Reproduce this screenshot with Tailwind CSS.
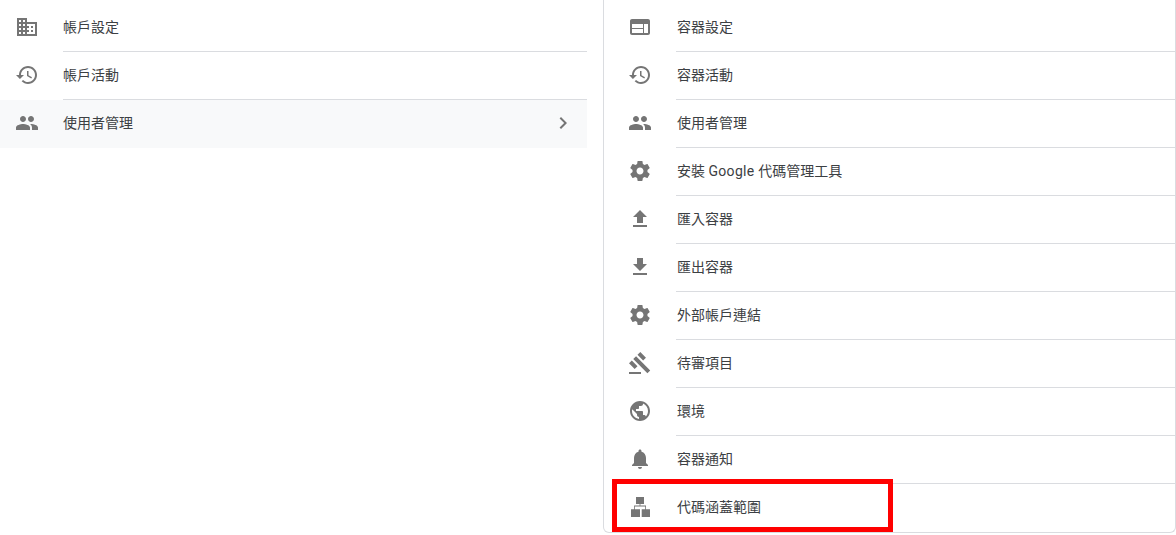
<!doctype html>
<html lang="zh-Hant">
<head>
<meta charset="utf-8">
<script src="https://cdn.jsdelivr.net/npm/@tailwindcss/browser@4"></script>
</head>
<body class="bg-white overflow-hidden">
<div class="relative flex w-[1176px] h-[535px] items-start gap-4 text-sm text-[#3c4043] font-['Roboto','Noto_Sans_CJK_TC',sans-serif]">
  <ul class="w-[587px] pt-[3px] shrink-0">
    <li class="flex h-12 items-center">
      <svg class="w-6 h-6 ml-[15px] mr-6 shrink-0 fill-[#757575]" viewBox="0 0 24 24"><path d="M12 7V3H2v18h20V7H12zM6 19H4v-2h2v2zm0-4H4v-2h2v2zm0-4H4V9h2v2zm0-4H4V5h2v2zm4 12H8v-2h2v2zm0-4H8v-2h2v2zm0-4H8V9h2v2zm0-4H8V5h2v2zm10 12h-8v-2h2v-2h-2v-2h2v-2h-2V9h8v10zm-2-8h-2v2h2v-2zm0 4h-2v2h2v-2z"/></svg>
      <div class="flex-1 h-full flex items-center shadow-[0_1px_0_#dadce0]">帳戶設定</div>
    </li>
    <li class="flex h-12 items-center">
      <svg class="w-6 h-6 ml-[15px] mr-6 shrink-0 fill-[#757575]" viewBox="0 0 24 24"><path d="M13 3c-4.97 0-9 4.03-9 9H1l3.89 3.89.07.14L9 12H6c0-3.87 3.13-7 7-7s7 3.13 7 7-3.13 7-7 7c-1.93 0-3.68-.79-4.94-2.06l-1.42 1.42C8.27 19.99 10.51 21 13 21c4.97 0 9-4.03 9-9s-4.03-9-9-9zm-1 5v5l4.28 2.54.72-1.21-3.5-2.08V8H12z"/></svg>
      <div class="flex-1 h-full flex items-center shadow-[0_1px_0_#dadce0]">帳戶活動</div>
    </li>
    <li class="flex h-12 mt-px pb-[2px] items-center bg-[#f8f9fa]">
      <svg class="w-6 h-6 ml-[15px] mr-6 shrink-0 fill-[#757575]" viewBox="0 0 24 24"><path d="M16 11c1.66 0 2.99-1.34 2.99-3S17.66 5 16 5c-1.66 0-3 1.34-3 3s1.34 3 3 3zm-8 0c1.66 0 2.99-1.34 2.99-3S9.66 5 8 5C6.34 5 5 6.34 5 8s1.34 3 3 3zm0 2c-2.33 0-7 1.17-7 3.5V19h14v-2.5c0-2.33-4.67-3.5-7-3.5zm8 0c-.29 0-.62.02-.97.05 1.16.84 1.97 1.97 1.97 3.45V19h6v-2.5c0-2.33-4.67-3.5-7-3.5z"/></svg>
      <div class="flex-1 h-full flex items-center">使用者管理</div>
      <svg class="w-6 h-6 mr-3 shrink-0 fill-[#757575]" viewBox="0 0 24 24"><path d="M10 6L8.59 7.41 13.17 12l-4.58 4.59L10 18l6-6z"/></svg>
    </li>
  </ul>
  <ul class="flex-1 h-[533px] pt-[3px] border-l border-r border-b border-[#dadce0] rounded-br-md rounded-bl-md">
    <li class="flex h-12 items-center">
      <svg class="w-6 h-6 ml-6 mr-6 shrink-0 fill-[#757575]" viewBox="0 0 24 24"><path d="M20 4H4c-1.1 0-1.99.9-1.99 2L2 18c0 1.1.9 2 2 2h16c1.1 0 2-.9 2-2V6c0-1.1-.9-2-2-2zm-5 14H4v-4h11v4zm0-5H4V9h11v4zm5 5h-4V9h4v9z"/></svg>
      <div class="flex-1 h-full flex items-center pl-px shadow-[0_1px_0_#dadce0]">容器設定</div>
    </li>
    <li class="flex h-12 items-center">
      <svg class="w-6 h-6 ml-6 mr-6 shrink-0 fill-[#757575]" viewBox="0 0 24 24"><path d="M13 3c-4.97 0-9 4.03-9 9H1l3.89 3.89.07.14L9 12H6c0-3.87 3.13-7 7-7s7 3.13 7 7-3.13 7-7 7c-1.93 0-3.68-.79-4.94-2.06l-1.42 1.42C8.27 19.99 10.51 21 13 21c4.97 0 9-4.03 9-9s-4.03-9-9-9zm-1 5v5l4.28 2.54.72-1.21-3.5-2.08V8H12z"/></svg>
      <div class="flex-1 h-full flex items-center pl-px shadow-[0_1px_0_#dadce0]">容器活動</div>
    </li>
    <li class="flex h-12 items-center">
      <svg class="w-6 h-6 ml-6 mr-6 shrink-0 fill-[#757575]" viewBox="0 0 24 24"><path d="M16 11c1.66 0 2.99-1.34 2.99-3S17.66 5 16 5c-1.66 0-3 1.34-3 3s1.34 3 3 3zm-8 0c1.66 0 2.99-1.34 2.99-3S9.66 5 8 5C6.34 5 5 6.34 5 8s1.34 3 3 3zm0 2c-2.33 0-7 1.17-7 3.5V19h14v-2.5c0-2.33-4.67-3.5-7-3.5zm8 0c-.29 0-.62.02-.97.05 1.16.84 1.97 1.97 1.97 3.45V19h6v-2.5c0-2.33-4.67-3.5-7-3.5z"/></svg>
      <div class="flex-1 h-full flex items-center pl-px shadow-[0_1px_0_#dadce0]">使用者管理</div>
    </li>
    <li class="flex h-12 items-center">
      <svg class="w-6 h-6 ml-6 mr-6 shrink-0 fill-[#757575]" viewBox="0 0 24 24"><path d="M19.43 12.98c.04-.32.07-.64.07-.98s-.03-.66-.07-.98l2.11-1.65c.19-.15.24-.42.12-.64l-2-3.46c-.12-.22-.39-.3-.61-.22l-2.49 1c-.52-.4-1.08-.73-1.69-.98l-.38-2.65C14.46 2.18 14.25 2 14 2h-4c-.25 0-.46.18-.49.42l-.38 2.65c-.61.25-1.17.59-1.69.98l-2.49-1c-.23-.09-.49 0-.61.22l-2 3.46c-.13.22-.07.49.12.64l2.11 1.65c-.04.32-.07.65-.07.98s.03.66.07.98l-2.11 1.65c-.19.15-.24.42-.12.64l2 3.46c.12.22.39.3.61.22l2.49-1c.52.4 1.08.73 1.69.98l.38 2.65c.03.24.24.42.49.42h4c.25 0 .46-.18.49-.42l.38-2.65c.61-.25 1.17-.59 1.69-.98l2.49 1c.23.09.49 0 .61-.22l2-3.46c.12-.22.07-.49-.12-.64l-2.11-1.65zM12 15.5c-1.93 0-3.5-1.57-3.5-3.5s1.57-3.5 3.5-3.5 3.5 1.57 3.5 3.5-1.57 3.5-3.5 3.5z"/></svg>
      <div class="flex-1 h-full flex items-center pl-px shadow-[0_1px_0_#dadce0] whitespace-pre">安裝 <span class="tracking-[0.3px]">Google </span>代碼管理工具</div>
    </li>
    <li class="flex h-12 items-center">
      <svg class="w-6 h-6 ml-6 mr-6 shrink-0 fill-[#757575]" viewBox="0 0 24 24"><path d="M9 16h6v-6h4l-7-7-7 7h4zm-4 2h14v2H5z"/></svg>
      <div class="flex-1 h-full flex items-center pl-px shadow-[0_1px_0_#dadce0]">匯入容器</div>
    </li>
    <li class="flex h-12 items-center">
      <svg class="w-6 h-6 ml-6 mr-6 shrink-0 fill-[#757575]" viewBox="0 0 24 24"><path d="M19 9h-4V3H9v6H5l7 7 7-7zM5 18v2h14v-2H5z"/></svg>
      <div class="flex-1 h-full flex items-center pl-px shadow-[0_1px_0_#dadce0]">匯出容器</div>
    </li>
    <li class="flex h-12 items-center">
      <svg class="w-6 h-6 ml-6 mr-6 shrink-0 fill-[#757575]" viewBox="0 0 24 24"><path d="M19.43 12.98c.04-.32.07-.64.07-.98s-.03-.66-.07-.98l2.11-1.65c.19-.15.24-.42.12-.64l-2-3.46c-.12-.22-.39-.3-.61-.22l-2.49 1c-.52-.4-1.08-.73-1.69-.98l-.38-2.65C14.46 2.18 14.25 2 14 2h-4c-.25 0-.46.18-.49.42l-.38 2.65c-.61.25-1.17.59-1.69.98l-2.49-1c-.23-.09-.49 0-.61.22l-2 3.46c-.13.22-.07.49.12.64l2.11 1.65c-.04.32-.07.65-.07.98s.03.66.07.98l-2.11 1.65c-.19.15-.24.42-.12.64l2 3.46c.12.22.39.3.61.22l2.49-1c.52.4 1.08.73 1.69.98l.38 2.65c.03.24.24.42.49.42h4c.25 0 .46-.18.49-.42l.38-2.65c.61-.25 1.17-.59 1.69-.98l2.49 1c.23.09.49 0 .61-.22l2-3.46c.12-.22.07-.49-.12-.64l-2.11-1.65zM12 15.5c-1.93 0-3.5-1.57-3.5-3.5s1.57-3.5 3.5-3.5 3.5 1.57 3.5 3.5-1.57 3.5-3.5 3.5z"/></svg>
      <div class="flex-1 h-full flex items-center pl-px shadow-[0_1px_0_#dadce0]">外部帳戶連結</div>
    </li>
    <li class="flex h-12 items-center">
      <svg class="w-6 h-6 ml-6 mr-6 shrink-0 fill-[#757575]" viewBox="0 0 24 24"><path d="M1 21h12v2H1zM5.245 8.07l2.83-2.827 14.14 14.142-2.828 2.828zM12.317 1l5.657 5.656-2.83 2.83-5.654-5.66zM3.825 9.485l5.657 5.657-2.828 2.828-5.657-5.657z"/></svg>
      <div class="flex-1 h-full flex items-center pl-px shadow-[0_1px_0_#dadce0]">待審項目</div>
    </li>
    <li class="flex h-12 items-center">
      <svg class="w-6 h-6 ml-6 mr-6 shrink-0 fill-[#757575]" viewBox="0 0 24 24"><path d="M12 2C6.48 2 2 6.48 2 12s4.48 10 10 10 10-4.48 10-10S17.52 2 12 2zm-1 17.93c-3.95-.49-7-3.85-7-7.93 0-.62.08-1.21.21-1.79L9 15v1c0 1.1.9 2 2 2v1.93zm6.9-2.54c-.26-.81-1-1.39-1.9-1.39h-1v-3c0-.55-.45-1-1-1H8v-2h2c.55 0 1-.45 1-1V7h2c1.1 0 2-.9 2-2v-.41c2.93 1.19 5 4.06 5 7.41 0 2.08-.8 3.97-2.1 5.39z"/></svg>
      <div class="flex-1 h-full flex items-center pl-px shadow-[0_1px_0_#dadce0]">環境</div>
    </li>
    <li class="flex h-12 items-center">
      <svg class="w-6 h-6 ml-6 mr-6 shrink-0 fill-[#757575]" viewBox="0 0 24 24"><path d="M12 22c1.1 0 2-.9 2-2h-4c0 1.1.89 2 2 2zm6-6v-5c0-3.07-1.64-5.64-4.5-6.32V4c0-.83-.67-1.5-1.5-1.5s-1.5.67-1.5 1.5v.68C7.63 5.36 6 7.92 6 11v5l-2 2v1h16v-1l-2-2z"/></svg>
      <div class="flex-1 h-full flex items-center pl-px shadow-[0_1px_0_#dadce0]">容器通知</div>
    </li>
    <li class="flex h-12 items-center">
      <svg class="w-6 h-6 ml-6 mr-6 shrink-0 fill-[#757575]" viewBox="0 0 24 24"><path d="M8 2h8v7H8zM3 14.300h9v7.700H3zM13.700 14.300H22v7.700h-8.300zM11.600 9h.8v1.600h5.600v3.700h-.8v-2.900H6.900v2.900h-.8v-3.700h5.500z"/></svg>
      <div class="flex-1 h-full flex items-center pl-px">代碼涵蓋範圍</div>
    </li>
  </ul>
  <div class="absolute left-[612px] top-[479px] w-[281px] h-[53px] border-[5px] border-[#ff0000]"></div>
</div>
</body>
</html>
